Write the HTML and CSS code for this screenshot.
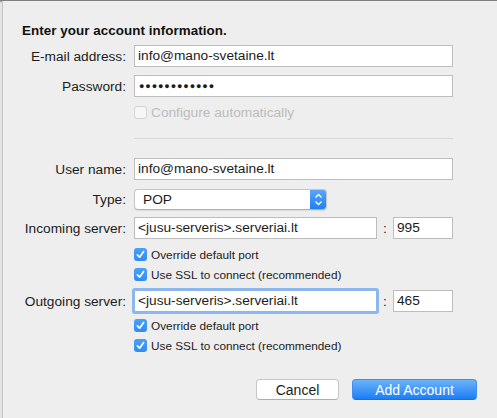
FILE: index.html
```html
<!DOCTYPE html>
<html>
<head>
<meta charset="utf-8">
<link rel="stylesheet" href="styles.css">
</head>
<body>
<div class="window">
  <div class="content">
    <div class="heading">Enter your account information.</div>

    <div class="row r-email">
      <label class="lbl">E-mail address:</label>
      <div class="field wide">info@mano-svetaine.lt</div>
    </div>
    <div class="row r-pass">
      <label class="lbl">Password:</label>
      <div class="field wide dots">●●●●●●●●●●●●</div>
    </div>
    <div class="row r-conf">
      <span></span>
      <div class="check disabled"><span class="box"></span><span class="ctext">Configure automatically</span></div>
    </div>
    <div class="row r-sep">
      <span></span>
      <div class="sep"></div>
    </div>

    <div class="row r-user">
      <label class="lbl">User name:</label>
      <div class="field wide">info@mano-svetaine.lt</div>
    </div>
    <div class="row r-type">
      <label class="lbl">Type:</label>
      <div class="popup"><span class="ptext">POP</span><span class="arrows"><svg width="17" height="21" viewBox="0 0 17 21"><path d="M5.5 8.5 L8.5 5.5 L11.5 8.5" fill="none" stroke="#fff" stroke-width="1.3"/><path d="M5.5 12.5 L8.5 15.5 L11.5 12.5" fill="none" stroke="#fff" stroke-width="1.3"/></svg></span></div>
    </div>
    <div class="row r-in">
      <label class="lbl">Incoming server:</label>
      <div class="server">
        <div class="field srv">&lt;jusu-serveris&gt;.serveriai.lt</div>
        <span class="colon">:</span>
        <div class="field port">995</div>
      </div>
    </div>
    <div class="row r-c1">
      <span></span>
      <div class="check"><span class="box on"><svg width="13" height="13" viewBox="0 0 13 13"><path d="M3.4 6.9 L5.6 9.2 L9.6 3.6" fill="none" stroke="#fff" stroke-width="1.7" stroke-linecap="round" stroke-linejoin="round"/></svg></span><span class="ctext">Override default port</span></div>
    </div>
    <div class="row r-c2">
      <span></span>
      <div class="check"><span class="box on"><svg width="13" height="13" viewBox="0 0 13 13"><path d="M3.4 6.9 L5.6 9.2 L9.6 3.6" fill="none" stroke="#fff" stroke-width="1.7" stroke-linecap="round" stroke-linejoin="round"/></svg></span><span class="ctext">Use SSL to connect (recommended)</span></div>
    </div>

    <div class="row r-out">
      <label class="lbl">Outgoing server:</label>
      <div class="server">
        <div class="field srv focus">&lt;jusu-serveris&gt;.serveriai.lt</div>
        <span class="colon">:</span>
        <div class="field port">465</div>
      </div>
    </div>
    <div class="row r-c3">
      <span></span>
      <div class="check"><span class="box on"><svg width="13" height="13" viewBox="0 0 13 13"><path d="M3.4 6.9 L5.6 9.2 L9.6 3.6" fill="none" stroke="#fff" stroke-width="1.7" stroke-linecap="round" stroke-linejoin="round"/></svg></span><span class="ctext">Override default port</span></div>
    </div>
    <div class="row r-c4">
      <span></span>
      <div class="check"><span class="box on"><svg width="13" height="13" viewBox="0 0 13 13"><path d="M3.4 6.9 L5.6 9.2 L9.6 3.6" fill="none" stroke="#fff" stroke-width="1.7" stroke-linecap="round" stroke-linejoin="round"/></svg></span><span class="ctext">Use SSL to connect (recommended)</span></div>
    </div>

    <div class="buttons">
      <div class="btn cancel">Cancel</div>
      <div class="btn primary">Add Account</div>
    </div>
  </div>
</div>
</body>
</html>
```

FILE: styles.css
```css
html, body {
  margin: 0;
  padding: 0;
  background: #ececec;
}
body {
  width: 497px;
  height: 418px;
  overflow: hidden;
  font-family: "Liberation Sans", Arial, Helvetica, sans-serif;
  color: #1c1c1c;
}
.window {
  height: 418px;
  box-sizing: border-box;
  border-top: 1px solid #7f7f7f;
  box-shadow: inset 0 1px 0 #a9a9a9, inset 0 2px 2px rgba(0,0,0,0.06);
  padding-left: 2px;
  background: linear-gradient(to right, #e6e6e6 0, #e6e6e6 2px, transparent 2px);
}
.content {
  height: 100%;
  box-sizing: border-box;
  border-left: 1px solid #c4c4c4;
  background: #eeeeee;
  padding: 22px 0 0 19px;
}
.heading {
  font-weight: bold;
  font-size: 13.4px;
  line-height: 16px;
  height: 16px;
  letter-spacing: 0.05px;
  color: #111;
}
.row {
  display: grid;
  grid-template-columns: 104px 319px;
  column-gap: 8px;
  align-items: center;
}
.lbl {
  text-align: right;
  font-size: 13.7px;
  white-space: nowrap;
}
.field {
  box-sizing: border-box;
  height: 22px;
  background: #fff;
  border: 1px solid #bdbdbd;
  font-size: 13.7px;
  line-height: 20px;
  padding-left: 3px;
  white-space: nowrap;
  overflow: hidden;
}
.dots {
  font-size: 9px;
  letter-spacing: 0.9px;
  padding-left: 4px;
}
.r-email { margin-top: 6px; }
.r-pass { margin-top: 8px; }
.r-conf { margin-top: 8px; height: 15px; }
.r-sep { margin-top: 18px; }
.sep { height: 1px; background: #d6d6d6; }
.r-user { margin-top: 19px; }
.r-type { margin-top: 9px; }
.r-in { margin-top: 7px; }
.r-c1 { margin-top: 8px; height: 15px; }
.r-c2 { margin-top: 5px; height: 15px; }
.r-out { margin-top: 8px; }
.r-c3 { margin-top: 6px; height: 15px; }
.r-c4 { margin-top: 5px; height: 15px; }

.check {
  display: flex;
  align-items: center;
  gap: 4px;
  height: 15px;
}
.box {
  width: 13px;
  height: 13px;
  box-sizing: border-box;
  border-radius: 3px;
  display: block;
  flex: none;
}
.box svg { display: block; }
.box.on {
  background: linear-gradient(#4aa1f8, #2f8cf4);
}
.disabled .box {
  background: #f6f6f6;
  border: 1px solid #d4d4d4;
}
.ctext {
  font-size: 11.8px;
  white-space: nowrap;
}
.disabled .ctext {
  font-size: 13.7px;
  color: #bcbcbc;
}

.popup {
  width: 193px;
  height: 21px;
  box-sizing: border-box;
  display: flex;
  background: #fff;
  border: 1px solid #c6c6c6;
  border-bottom-color: #b0b0b0;
  border-radius: 4px;
  box-shadow: 0 0.5px 1px rgba(0,0,0,0.08);
  overflow: hidden;
}
.ptext {
  flex: 1;
  font-size: 13.7px;
  line-height: 19px;
  padding-left: 8px;
}
.arrows {
  width: 17px;
  margin: -1px -1px -1px 0;
  background: linear-gradient(#5aa8fa, #1c7ef5);
  border-radius: 0 4px 4px 0;
}
.arrows svg { display: block; }

.server {
  display: flex;
  align-items: center;
}
.srv { width: 243px; }
.colon {
  width: 16px;
  text-align: center;
  font-size: 13.7px;
}
.port { width: 60px; }
.focus {
  border-color: #8fb4e8;
  box-shadow: 0 0 0 2px #8cb8f0;
  border-radius: 1px;
}

.buttons {
  display: flex;
  justify-content: flex-end;
  gap: 13px;
  margin-top: 26px;
  padding-right: 20px;
}
.btn {
  height: 21px;
  box-sizing: border-box;
  border-radius: 4px;
  font-size: 14px;
  line-height: 20px;
  text-align: center;
}
.cancel {
  width: 83px;
  background: #fff;
  border: 1px solid #c5c5c5;
  border-bottom-color: #adadad;
  color: #1c1c1c;
}
.primary {
  width: 125px;
  background: linear-gradient(#6cb3fa, #1b7ef6);
  border: 1px solid #3f8ef0;
  border-bottom-color: #1a6fe0;
  color: #fff;
}
```
